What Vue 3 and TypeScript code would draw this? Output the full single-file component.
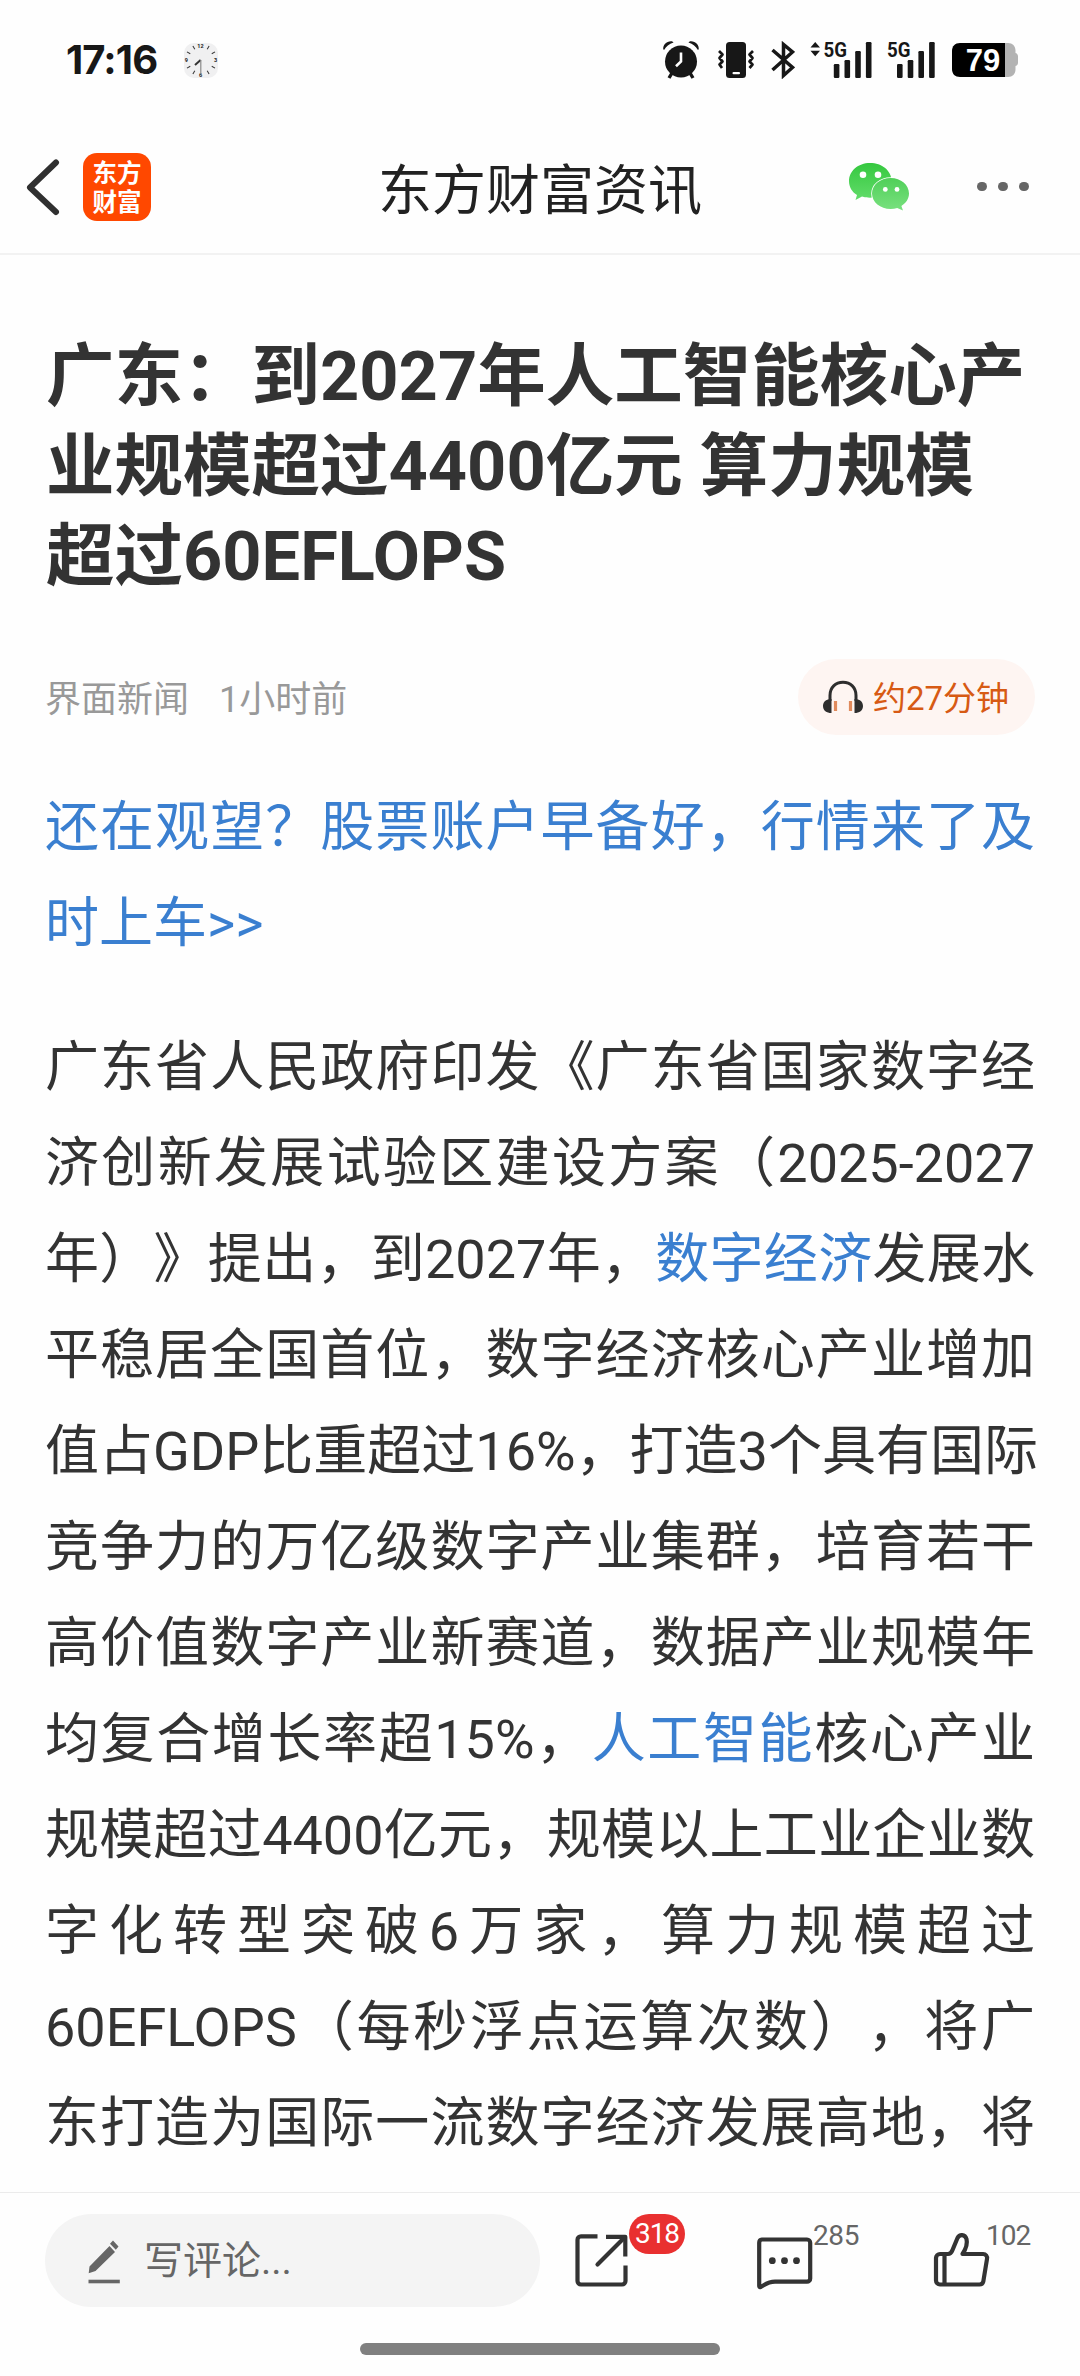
<script setup lang="ts">
interface Segment {
  text: string
  link?: boolean
}

const headline: string[] = [
  '广东：到2027年人工智能核心产',
  '业规模超过4400亿元 算力规模',
  '超过60EFLOPS',
]

const promo: string[] = ['还在观望？股票账户早备好，行情来了及', '时上车>>']

const body: Segment[][] = [
  [{ text: '广东省人民政府印发《广东省国家数字经' }],
  [{ text: '济创新发展试验区建设方案（2025-2027' }],
  [{ text: '年）》提出，到2027年，' }, { text: '数字经济', link: true }, { text: '发展水' }],
  [{ text: '平稳居全国首位，数字经济核心产业增加' }],
  [{ text: '值占GDP比重超过16%，打造3个具有国际' }],
  [{ text: '竞争力的万亿级数字产业集群，培育若干' }],
  [{ text: '高价值数字产业新赛道，数据产业规模年' }],
  [{ text: '均复合增长率超15%，' }, { text: '人工智能', link: true }, { text: '核心产业' }],
  [{ text: '规模超过4400亿元，规模以上工业企业数' }],
  [{ text: '字化转型突破6万家，算力规模超过' }],
  [{ text: '60EFLOPS（每秒浮点运算次数），将广' }],
  [{ text: '东打造为国际一流数字经济发展高地，将' }],
]

const ticks: number[] = [30, 60, 120, 150, 210, 240, 300, 330]
const bars = [
  { x: 0, h: 14 },
  { x: 10.7, h: 18 },
  { x: 21.4, h: 27 },
  { x: 32.1, h: 36 },
]
</script>

<template>
  <div class="screen">
    <div class="status">
      <span class="time">17:16</span>
      <svg class="clock" width="36" height="36" viewBox="0 0 36 36">
        <rect x="1" y="1" width="34" height="35" rx="10" fill="#f0f0f1" />
        <g stroke="#333" stroke-width="1">
          <line v-for="t in ticks" :key="t" x1="18" y1="1.8" x2="18" y2="5.6" :transform="`rotate(${t} 18 18)`" />
        </g>
        <g font-family="Roboto, sans-serif" font-weight="700" font-size="5.5" fill="#222" text-anchor="middle">
          <text x="17.5" y="5.5">12</text>
          <text x="32.6" y="20">3</text>
          <text x="17.5" y="35.4">6</text>
          <text x="3.4" y="20">9</text>
        </g>
        <path d="M17.6 18 12 23" stroke="#333" stroke-width="2" />
        <path d="M17.8 18V32" stroke="#8a8a8a" stroke-width="1.2" />
      </svg>

      <div class="status-icons">
        <svg class="i-alarm" width="38" height="40" viewBox="0 0 38 40">
          <circle cx="19" cy="21.5" r="16" fill="#171717" />
          <path d="M1.3 9.5C.5 5 5 .6 10 1.3l1.6 1.2C7 4 4 6.500 2.300 9.800ZM36.700 9.500C37.500 5 33 .6 28 1.300l-1.600 1.200C31 4 34 6.500 35.700 9.800Z" fill="#171717" />
          <path d="m10 33-3 5M28 33l3 5" stroke="#171717" stroke-width="3.400" />
          <path d="M19 12.500v9l-5 4.800" fill="none" stroke="#fff" stroke-width="2.600" />
        </svg>
        <svg class="i-vib" width="38" height="38" viewBox="0 0 38 38">
          <rect x="9" y="1" width="20" height="36" rx="3.500" fill="#171717" />
          <rect x="15.500" y="31" width="7.500" height="2.200" rx="1" fill="#fff" />
          <path d="m2 10 3.500 3.500L2.500 17 5.500 20.500 2.500 23.500 5 27 M36 10l-3.500 3.500 3 3.500-3 3.500 3 3-3 3.500" fill="none" stroke="#171717" stroke-width="2.700" stroke-linejoin="round" />
        </svg>
        <svg class="i-bt" width="24" height="38" viewBox="0 0 24 38">
          <path d="m1.500 9 20 17.500L12.500 34.500V3.500l9 7.500-20 18" fill="none" stroke="#171717" stroke-width="3.500" />
        </svg>
        <svg class="i-sig1" width="62" height="50" viewBox="0 -6 62 50">
          <path d="M.5 6.500 5.200 1 10 6.500ZM.5 9.800h9.500L5.200 15.300Z" fill="#171717" />
          <text class="net" x="13.500" y="16" textLength="23.500" lengthAdjust="spacingAndGlyphs">5G</text>
          <rect v-for="b in bars" :key="b.x" :x="b.x + 23.800" :y="37 - b.h" width="5.600" :height="b.h" rx="1.200" fill="#171717" />
        </svg>
        <svg class="i-sig2" width="50" height="50" viewBox="0 -6 50 50">
          <text class="net" x="1" y="16" textLength="23.500" lengthAdjust="spacingAndGlyphs">5G</text>
          <rect v-for="b in bars" :key="b.x" :x="b.x + 11" :y="37 - b.h" width="5.600" :height="b.h" rx="1.200" fill="#171717" />
        </svg>
        <svg class="i-bat" width="67" height="34" viewBox="0 0 67 34">
          <path d="M53 0h3c4.500 0 7.500 3 7.500 7.500V10c2 .5 2.500 2 2.500 3.500v6c0 1.500-.5 3-2.500 3.500v3.500c0 4.500-3 7.500-7.500 7.500h-3Z" fill="#b3b3b3" />
          <path d="M53 0H8C3 0 0 3 0 8v18c0 5 3 8 8 8h45Z" fill="#000" />
          <text x="31" y="28.300" text-anchor="middle" font-family="'Liberation Sans', sans-serif" font-weight="700" font-size="31" fill="#fff">79</text>
        </svg>
      </div>
    </div>

    <header class="nav">
      <svg class="back" width="36" height="58" viewBox="0 0 36 58">
        <path d="M31 4.500 5 29.500 31 54" fill="none" stroke="#303030" stroke-width="6" stroke-linecap="round" stroke-linejoin="round" />
      </svg>
      <div class="logo">东方<br />财富</div>
      <h1 class="title">东方财富资讯</h1>
      <svg class="wechat" width="62" height="50" viewBox="848 162 62 50">
        <defs>
          <linearGradient id="wxBig" x1="0" y1="0" x2="0" y2="1"><stop offset="0" stop-color="#35c83f" /><stop offset="1" stop-color="#62dc6a" /></linearGradient>
          <linearGradient id="wxSmall" x1="0" y1="0" x2="0" y2="1"><stop offset="0" stop-color="#50cf59" /><stop offset="1" stop-color="#79e17f" /></linearGradient>
        </defs>
        <path d="M870 163c-12 0-21 8-21 18 0 6 3 11 8 14l-1.500 5 6.500-3.500c2.500.8 5 1.200 8 1.200 12 0 21.500-7.500 21.500-17.200S882 163 870 163Z" fill="url(#wxBig)" />
        <path d="M890.700 178c-10.500 0-18.700 7-18.700 15.500s8.200 15.500 18.700 15.500c2.300 0 4.500-.3 6.500-1l5.800 2.600-1.600-4.600c4.500-2.800 7.600-7.300 7.600-12.500 0-8.500-8-15.500-18.300-15.500Z" fill="url(#wxSmall)" stroke="#fff" stroke-width="1.600" paint-order="stroke" />
        <g fill="#fff"><circle cx="863" cy="174.700" r="3.300" /><circle cx="878" cy="174.700" r="3.300" /><circle cx="885.300" cy="189.400" r="2.400" /><circle cx="897" cy="189.400" r="2.400" /></g>
      </svg>
      <div class="more"><i></i><i></i><i></i></div>
    </header>

    <main class="article">
      <h2 class="headline"><span v-for="l in headline" :key="l">{{ l }}</span></h2>
      <div class="meta">
        <span class="source">界面新闻</span><span class="source ago">1小时前</span>
        <div class="listen">
          <svg width="42" height="34" viewBox="0 0 42 34">
            <path d="M8 21V15.500C8 7.500 13.500 2.300 21 2.300S34 7.500 34 15.500V21" fill="none" stroke="#2e2e2e" stroke-width="3" />
            <path d="M9.500 19v14C4.500 33 1 30.500 1 26s3.500-7 8.500-7ZM32.500 19v14c5 0 8.500-2.500 8.500-7s-3.500-7-8.500-7Z" fill="#2e2e2e" />
            <path d="M13.500 21v10M28.500 21v10" stroke="#e08a5c" stroke-width="3.200" />
          </svg>
          <span>约27分钟</span>
        </div>
      </div>
      <p class="text promo"><span v-for="(l, i) in promo" :key="l" class="line" :class="{ last: i === promo.length - 1 }">{{ l }}</span></p>
      <p class="text"><span v-for="(l, i) in body" :key="i" class="line"><span v-for="s in l" :key="s.text" :class="{ link: s.link }">{{ s.text }}</span></span></p>
    </main>

    <footer class="bar">
      <div class="input">
        <svg width="34" height="46" viewBox="0 0 34 46">
          <path d="m22.500 8 5.500 6L8.500 33 1.700 35.200 2.500 28.500ZM26 2.500 31.500 8.500 28.800 11.700 23 5.800Z" fill="#666" />
          <path d="M1.500 43.500H32.800" stroke="#666" stroke-width="3.600" />
        </svg>
        <span>写评论...</span>
      </div>
      <div class="act share">
        <svg width="56" height="58" viewBox="574 2232 56 58" fill="none" stroke="#333" stroke-width="4.200">
          <path d="M597.500 2236.300H581a3.500 3.500 0 0 0-3.500 3.500V2281a3.500 3.500 0 0 0 3.500 3.500H622a3.500 3.500 0 0 0 3.500-3.500V2265.500" />
          <path d="M606 2236.800H625.300V2256.500" stroke-linejoin="round" /><path d="m597.500 2264.500 27-27" stroke-linecap="round" />
        </svg>
        <b class="badge">318</b>
      </div>
      <div class="act comment">
        <svg width="58" height="58" viewBox="756 2234 58 58" fill="none" stroke="#333" stroke-width="4.200" stroke-linejoin="round">
          <path d="M762 2239.500H807a3.200 3.200 0 0 1 3.200 3.200V2278.500a3.200 3.200 0 0 1-3.200 3.200H775C768 2281.700 764.500 2285 760.500 2287Q759.200 2287.500 759.200 2285.500V2242.700a3.200 3.200 0 0 1 2.800-3.200Z" />
          <g fill="#333" stroke="none"><circle cx="772.300" cy="2260.700" r="3.400" /><circle cx="784.500" cy="2260.700" r="3.400" /><circle cx="796.500" cy="2260.700" r="3.400" /></g>
        </svg>
        <span class="count">285</span>
      </div>
      <div class="act like">
        <svg width="58" height="60" viewBox="933 2229 58 60" fill="none" stroke="#333" stroke-width="4.200" stroke-linejoin="round">
          <path d="M948 2254H940a4 4 0 0 0-4 4V2280.500a4 4 0 0 0 4 4H979.500a4 4 0 0 0 3.800-3L987 2259a4 4 0 0 0-4-5H962.500C966.500 2248 967.500 2243 966.500 2239 965 2234 959.500 2234 957.500 2238L952.500 2250Q951 2254 948 2254Z" />
          <path d="M944.500 2254V2284.500" />
        </svg>
        <span class="count">102</span>
      </div>
    </footer>
    <div class="home"><i></i></div>
  </div>
</template>

<style>
body {
  background: #fdfdfd;
}
</style>

<style scoped>
.screen {
  width: 1080px;
  height: 2376px;
  overflow: hidden;
  display: flex;
  flex-direction: column;
  background: #fefefe;
  color: #333;
  font-family: Roboto, 'Noto Sans CJK SC', sans-serif;
  text-spacing-trim: space-all;
}
.screen svg {
  display: block;
  flex: none;
}
.status {
  height: 120px;
  flex: none;
  display: flex;
  align-items: center;
  padding-left: 66px;
}
.time {
  width: 117px;
  font: 700 40px/48px Inter, Roboto, sans-serif;
  letter-spacing: -0.9px;
  color: #171717;
}
.status-icons {
  display: flex;
  align-items: center;
  margin-left: auto;
  margin-right: 61px;
}
.i-vib { margin-left: 17px; }
.i-bt { margin-left: 16px; }
.i-sig1 { margin-left: 15px; }
.i-sig2 { margin-left: 14px; }
.i-bat { margin-left: 16px; }
.net {
  font: 700 21px Roboto, sans-serif;
  fill: #171717;
}
.nav {
  height: 133px;
  flex: none;
  display: flex;
  align-items: center;
  border-bottom: 2px solid #f2f2f2;
  box-sizing: content-box;
}
.back { margin-left: 25px; }
.logo {
  width: 68px;
  height: 68px;
  margin-left: 22px;
  border-radius: 14px;
  background: #ff4800;
  color: #fff;
  box-sizing: border-box;
  padding-top: 4px;
  text-align: center;
  font: 700 24.500px/29px 'Noto Sans CJK SC', sans-serif;
}
.title {
  width: 324px;
  margin: 10px 0 0 227px;
  font-size: 54px;
  line-height: 80px;
  font-weight: 400;
  color: #222;
  white-space: nowrap;
}
.wechat { margin-left: 146px; }
.more {
  display: flex;
  gap: 11.500px;
  margin-left: 67px;
}
.more i {
  width: 9.500px;
  height: 9.500px;
  border-radius: 50%;
  background: #666;
}
.article {
  height: 1937px;
  flex: none;
  box-sizing: border-box;
  padding: 77px 45px 0;
  overflow: hidden;
}
.headline {
  margin: 0 0 0 1px;
  font-size: 68.500px;
  line-height: 90px;
  font-weight: 700;
  white-space: nowrap;
}
.headline span {
  display: block;
}
.meta {
  height: 76px;
  margin-top: 57px;
  display: flex;
  align-items: center;
  font-size: 36px;
  color: #999;
}
.source { margin-bottom: 3px; }
.ago { margin-left: 30px; }
.listen {
  width: 237px;
  height: 76px;
  margin-left: auto;
  box-sizing: border-box;
  padding-left: 24px;
  border-radius: 38px;
  background: #fef5f2;
  display: flex;
  align-items: center;
  gap: 9px;
  font-size: 33px;
  color: #d75a14;
  white-space: nowrap;
}
.listen span { margin-bottom: 3px; }
.text {
  margin: 48px 0 0;
  font-size: 54px;
  line-height: 96px;
}
.line {
  display: block;
  white-space: nowrap;
  text-align: justify;
  text-align-last: justify;
}
.line.last {
  text-align-last: left;
}
.promo {
  margin-top: 45px;
}
.promo,
.link {
  color: #3a7fd0;
}
.bar {
  height: 129px;
  flex: none;
  display: flex;
  align-items: flex-start;
  border-top: 1px solid #ebebeb;
}
.input {
  width: 495px;
  height: 93px;
  margin: 21px 0 0 45px;
  box-sizing: border-box;
  padding-left: 42px;
  border-radius: 47px;
  background: #f4f4f4;
  display: flex;
  align-items: center;
  gap: 23px;
  font-size: 39px;
  color: #666;
}
.input span { margin-bottom: 7px; }
.act {
  position: relative;
}
.share { margin: 39px 0 0 34px; }
.comment { margin: 41px 0 0 126px; }
.like { margin: 36px 0 0 119px; }
.badge {
  position: absolute;
  left: 55px;
  top: -18px;
  width: 56px;
  height: 40px;
  border-radius: 20px;
  background: #e93030;
  color: #fff;
  font: 400 28px/40px Roboto, sans-serif;
  letter-spacing: -1px;
  text-align: center;
}
.count {
  position: absolute;
  left: 57px;
  top: -15px;
  font-size: 28px;
  line-height: 33px;
  letter-spacing: -0.4px;
  color: #666;
}
.like .count {
  left: 53px;
  top: -10px;
  letter-spacing: -1px;
}
.home {
  display: flex;
  justify-content: center;
  padding-top: 21px;
}
.home i {
  width: 360px;
  height: 12px;
  border-radius: 6px;
  background: #808080;
}
</style>
